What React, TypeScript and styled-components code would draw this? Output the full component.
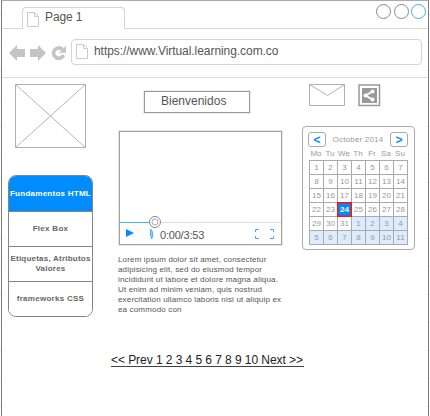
import React from 'react';
import styled, { createGlobalStyle, css } from 'styled-components';

const Global = createGlobalStyle`
  * { box-sizing: border-box; }
  body { margin: 0; background: #fff; font-family: "Liberation Sans", Arial, sans-serif; color: #555; }
  svg { display: block; flex: none; }
`;

const Canvas = styled.div`
  width: 430px;
  height: 416px;
  overflow: hidden;
  padding: 0 1px;
  background: repeating-linear-gradient(#fff 0 14px, #e4e4e4 14px 15px, #fff 15px 28px);
`;
const Browser = styled.div`
  display: flex;
  flex-direction: column;
  height: 416px;
  background: #fff;
  border: 1px solid #7b7b7b;
  border-top-color: #aaa;
  border-bottom: 0;
`;
const TabStrip = styled.header`
  display: flex;
  justify-content: space-between;
  height: 28px;
  padding: 3px 2px 0 20px;
  border-bottom: 1px solid #d9d9d9;
`;
const Tab = styled.div`
  display: flex;
  gap: 6px;
  width: 103px;
  height: 22px;
  margin-top: 3px;
  padding: 4px 0 0 4px;
  border: 1px solid #d5d5d5;
  border-bottom: 0;
  border-radius: 4px 4px 0 0;
  background: #fff;
  font-size: 12px;
  line-height: 12px;
`;
const TabLabel = styled.span`
  margin-top: -1px;
  letter-spacing: -0.1px;
`;
const WindowButtons = styled.div`
  display: flex;
  gap: 2.5px;
`;
const WindowButton = styled.i<{ $color: string }>`
  width: 15px;
  height: 15px;
  border: 1px solid ${p => p.$color};
  border-radius: 50%;
`;
const Toolbar = styled.div`
  display: flex;
  align-items: center;
  height: 49px;
  padding: 0 6px 3px 7px;
  border-bottom: 1px solid #dedede;
`;
const NavIcons = styled.div`
  display: flex;
  gap: 5px;
  width: 62px;
  padding-top: 2px;
`;
const Address = styled.div`
  display: flex;
  align-items: center;
  gap: 6px;
  flex: 1;
  height: 26px;
  padding-left: 4px;
  border: 1px solid #d5d5d5;
  border-radius: 4px;
  font-size: 12px;
`;
const Url = styled.span`
  letter-spacing: -0.06px;
  margin-top: -2px;
`;
const Content = styled.main`
  display: grid;
  grid-template-columns: 91px 209px 1fr;
  height: 269px;
`;
const SideColumn = styled.aside`
  padding: 6px 0 0 6px;
`;
const MenuList = styled.ul`
  margin: 27px 0 0;
  padding: 0;
  width: 85px;
  height: 142px;
  list-style: none;
  overflow: hidden;
  border: 1px solid #858585;
  border-radius: 8px;
`;
const MenuItem = styled.li<{ $active?: boolean; $spacing?: number }>`
  display: flex;
  align-items: center;
  justify-content: center;
  height: 35px;
  margin: 0 -1px;
  text-align: center;
  white-space: pre-line;
  font-size: 8px;
  line-height: 10px;
  font-weight: bold;
  letter-spacing: ${p => p.$spacing ?? 0.3}px;
  color: ${p => (p.$active ? '#fff' : '#666')};
  background: ${p => (p.$active ? '#008cff' : '#fff')};
  & + & { border-top: 1px solid #858585; }
`;
const MainColumn = styled.section`
  display: flex;
  flex-direction: column;
  padding: 13px 0 0 26px;
`;
const Welcome = styled.h1`
  width: 106px;
  height: 22px;
  margin: 0 0 18px 25px;
  padding-left: 16px;
  border: 1px solid #999;
  outline: 1px solid #ececec;
  font-size: 12px;
  font-weight: normal;
  line-height: 19px;
`;
const Player = styled.div`
  display: flex;
  flex-direction: column;
  justify-content: flex-end;
  width: 163px;
  height: 114px;
  border: 1px solid #a2a2a2;
  outline: 1px solid #e6e6e6;
`;
const Progress = styled.div`
  display: flex;
  align-items: center;
  height: 14px;
`;
const Track = styled.i<{ $color: string; $width: number }>`
  width: ${p => p.$width}px;
  height: 1px;
  background: ${p => p.$color};
`;
const Controls = styled.div`
  display: flex;
  align-items: flex-start;
  height: 15px;
  padding: 0 7px 0 6px;
`;
const Time = styled.span`
  flex: 1;
  margin-left: 5px;
  font-size: 11px;
  line-height: 12px;
  letter-spacing: -0.2px;
`;
const Paragraph = styled.p`
  margin: 10px 0 0 -1px;
  font-size: 8px;
  line-height: 10px;
  white-space: pre;
  letter-spacing: 0.16px;
`;
const RightColumn = styled.aside`
  padding: 6px 0 0;
`;
const Shortcuts = styled.div`
  display: flex;
  gap: 12px;
  padding-left: 7px;
`;
const Calendar = styled.section`
  width: 113px;
  height: 124px;
  margin-top: 19px;
  padding: 5px 6px 0;
  border: 1px solid #aaa;
  border-radius: 4px;
  color: #999;
  font-size: 8px;
`;
const MonthBar = styled.div`
  display: flex;
  align-items: center;
  justify-content: space-between;
  height: 15px;
  margin: 0 0 0 -1px;
  letter-spacing: 0.2px;
`;
const MonthButton = styled.button`
  width: 18px;
  height: 15px;
  padding: 0;
  border: 1px solid #aaa;
  border-radius: 3px;
  background: #fff;
  color: #008cff;
  font: bold 12px/12px "Liberation Sans", Arial, sans-serif;
`;
const Week = styled.div`
  display: grid;
  grid-template-columns: repeat(7, 14px);
  height: 13px;
  line-height: 13px;
  text-align: center;
  white-space: nowrap;
`;
const Days = styled.div`
  display: grid;
  grid-template-columns: repeat(7, 14px);
  grid-auto-rows: 14px;
  width: 99px;
  border: solid #aaa;
  border-width: 1px 0 0 1px;
`;
const Day = styled.span<{ $next: boolean; $today: boolean }>`
  border: solid #aaa;
  border-width: 0 1px 1px 0;
  text-align: center;
  line-height: 13px;
  background: ${p => (p.$next ? '#dcecfc' : '#fff')};
  ${p => p.$today && css`
    z-index: 1;
    margin: -1px 0 0 -1px;
    border: 1px solid #f11;
    box-shadow: inset 0 0 0 0.5px #f11;
    background: #008cff;
    color: #fff;
    font-weight: bold;
  `}
`;
const Pager = styled.nav`
  width: 193px;
  height: 14px;
  margin: 6px 0 0 109px;
  border-bottom: 1px solid #444;
  color: #222;
  font-size: 12px;
  line-height: 14px;
  white-space: nowrap;
  letter-spacing: -0.06px;
`;

const PageIcon = ({ width = 12, height = 15 }) => (
  <svg width={width} height={height} viewBox="0 0 12 15" fill="none" stroke="#cacaca">
    <path d="M.5.5h7l4 4v10H.5zM7.5.5v4h4" />
  </svg>
);

const weekdays = ['Mo', 'Tu', 'We', 'Th', 'Fr', 'Sa', 'Su'];
const menu = [
  { label: 'Fundamentos HTML', active: true, spacing: 0.26 },
  { label: 'Flex Box', spacing: 0.3 },
  { label: 'Etiquetas, Atributos\nValores', spacing: 0.22 },
  { label: 'frameworks CSS', spacing: 0.28 },
];

export default function App() {
  return (
    <Canvas>
      <Global />
      <Browser>
        <TabStrip>
          <Tab><PageIcon /><TabLabel>Page 1</TabLabel></Tab>
          <WindowButtons>
            <WindowButton $color="#888" />
            <WindowButton $color="#888" />
            <WindowButton $color="#41aaff" />
          </WindowButtons>
        </TabStrip>
        <Toolbar>
          <NavIcons>
            <svg width="16" height="16" fill="#c4c4c4"><path d="M0 8 8 0v4h8v8H8v4z" /></svg>
            <svg width="16" height="16" fill="#c4c4c4"><path d="M16 8 8 0v4H0v8h8v4z" /></svg>
            <svg width="16" height="16" fill="none" stroke="#c4c4c4">
              <path d="M11.4 4.4A5.2 5.2 0 1 0 12.6 10" strokeWidth="3.6" />
              <path d="M15 .8v7H8z" fill="#c4c4c4" stroke="none" />
            </svg>
          </NavIcons>
          <Address><PageIcon /><Url>https://www.Virtual.learning.com.co</Url></Address>
        </Toolbar>
        <Content>
          <SideColumn>
            <svg width="86" height="64" fill="none">
              <path d="m7.5.5 70 63m0-63-70 63" stroke="#b4b4b4" />
              <path d="M7.5.5h70v63h-70z" stroke="#b0b0b0" />
            </svg>
            <MenuList>
              {menu.map(item => (
                <MenuItem key={item.label} $active={item.active} $spacing={item.spacing}>{item.label}</MenuItem>
              ))}
            </MenuList>
          </SideColumn>
          <MainColumn>
            <Welcome>Bienvenidos</Welcome>
            <Player>
              <Progress>
                <Track $color="#4badff" $width={29} />
                <svg width="12" height="12" fill="none" stroke="#888">
                  <circle cx="6" cy="6" r="5.5" /><circle cx="6" cy="6" r="3" stroke="#aaa" />
                </svg>
                <Track $color="#ddd" $width={120} />
              </Progress>
              <Controls>
                <svg width="8" height="8" fill="#008cff"><path d="m0 0 8 4-8 4z" /></svg>
                <svg width="21" height="11" fill="none" stroke="#41aaff"><path d="M16.500 0v5l1 5q2-2.500 1-5 .5-3-2-5" fill="#9ed4ff" /></svg>
                <Time>0:00/3:53</Time>
                <svg width="19" height="10" fill="none" stroke="#41aaff">
                  <path d="M4 .5H.5V3m0 4v2.5H4M15 .5h3.500V3m0 4v2.5H15" />
                </svg>
              </Controls>
            </Player>
            <Paragraph>{`Lorem ipsum dolor sit amet, consectetur
adipisicing elit, sed do eiusmod tempor
incididunt ut labore et dolore magna aliqua.
Ut enim ad minim veniam, quis nostrud
exercitation ullamco laboris nisi ut aliquip ex
ea commodo con`}</Paragraph>
          </MainColumn>
          <RightColumn>
            <Shortcuts>
              <svg width="37" height="23" fill="none" stroke="#b0b0b0"><path d="M.5.5h35v21H.5zl18 11 17-11" /></svg>
              <svg width="23" height="23" fill="none" stroke="#999">
                <path d="M1 1h20.500v20.500H1z" strokeWidth="1.5" />
                <path d="M4 4h15v15H4z" fill="#999" stroke="none" />
                <path d="m14.500 7.500-7 4 7 4" stroke="#fff" strokeWidth="2" />
                <g fill="#fff" stroke="none"><circle cx="14.500" cy="7.500" r="2" /><circle cx="7.500" cy="11.500" r="2" /><circle cx="14.500" cy="15.500" r="2" /></g>
              </svg>
            </Shortcuts>
            <Calendar>
              <MonthBar><MonthButton>&lt;</MonthButton>October 2014<MonthButton>&gt;</MonthButton></MonthBar>
              <Week>{weekdays.map(day => <span key={day}>{day}</span>)}</Week>
              <Days>
                {Array.from({ length: 42 }, (_, i) => (
                  <Day key={i} $today={i === 23} $next={i > 30}>{i < 31 ? i + 1 : i - 30}</Day>
                ))}
              </Days>
            </Calendar>
          </RightColumn>
        </Content>
        <Pager>&lt;&lt; Prev 1 2 3 4 5 6 7 8 9 10 Next &gt;&gt;</Pager>
      </Browser>
    </Canvas>
  );
}
